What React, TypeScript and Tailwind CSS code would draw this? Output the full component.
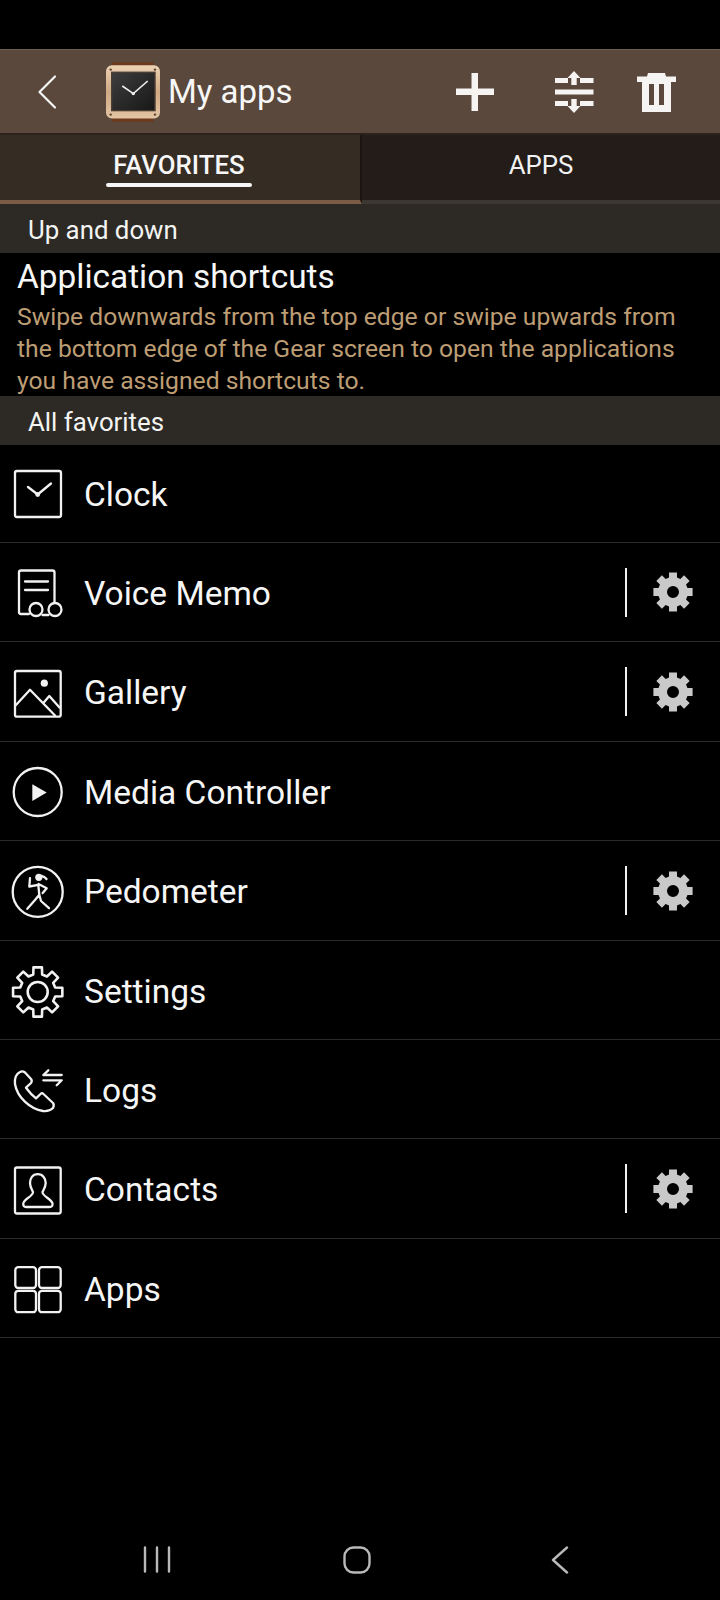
import React from "react";

function gear(cx: number, cy: number, ro: number, ri: number, n: number, tw: number, bw: number) {
  const p: string[] = [];
  for (let i = 0; i < n; i++) {
    const a = (i * 2 * Math.PI) / n - Math.PI / 2;
    const pt = (r: number, d: number) => `${(cx + r * Math.cos(a + d)).toFixed(2)} ${(cy + r * Math.sin(a + d)).toFixed(2)}`;
    p.push(`${i === 0 ? "M" : "L"}${pt(ri, -bw)}`, `L${pt(ro, -tw)}`, `L${pt(ro, tw)}`, `L${pt(ri, bw)}`);
  }
  return p.join(" ") + " Z";
}

const S = { fill: "none", stroke: "#f2f2f2", strokeWidth: 2.3, strokeLinecap: "round" as const, strokeLinejoin: "round" as const };

const Box = ({ children }: { children: React.ReactNode }) => (
  <svg viewBox="0 0 60 60" className="w-[60px] h-[60px] shrink-0 ml-[8px]" {...S}>
    {children}
  </svg>
);

const ClockI = () => (
  <Box>
    <rect x="7" y="7" width="46" height="46" rx="2" />
    <path d="M20 23 L29.7 30.5 L43 19.5" />
    <circle cx="29.7" cy="30.5" r="2.4" fill="#f2f2f2" stroke="none" />
  </Box>
);
const VoiceI = () => (
  <Box>
    <path d="M21 52 H13 Q11 52 11 50 V10.5 Q11 8.5 13 8.5 H44.5 Q46.5 8.5 46.5 10.5 V40.5" />
    <path d="M17 19.5 H40 M17 28 H40" />
    <circle cx="28" cy="47.5" r="6.5" />
    <circle cx="47" cy="47.5" r="6.5" />
    <path d="M34.5 53 H40.5" />
  </Box>
);
const GalleryI = () => (
  <Box>
    <rect x="7" y="9" width="45.7" height="45.7" rx="2" />
    <circle cx="36.3" cy="21.2" r="3.6" fill="#f2f2f2" stroke="none" />
    <path d="M8 43 L22 27.8 L47 53.5 M35.3 41 L41.3 34 L51.5 45.5" />
  </Box>
);
const MediaI = () => (
  <Box>
    <circle cx="29.7" cy="31" r="24" />
    <path d="M24.3 23.3 L38.7 31.5 L24.3 40 Z" fill="#f2f2f2" stroke="none" />
  </Box>
);
const PedoI = () => (
  <Box>
    <circle cx="29.7" cy="30.8" r="25" />
    <circle cx="30.8" cy="16.3" r="3.6" fill="#f2f2f2" stroke="none" />
    <path d="M33.5 15 Q36.5 15.5 38.5 18" />
    <path d="M22 17.2 L21.3 25.5 L30.3 23.8 L31.3 33.8 L27 39 L19.3 47.8 M31.3 33.8 L33 40 L41 47.2 M30.5 23 L38.7 27.2 L34.7 32" />
  </Box>
);
const SettingsI = () => (
  <Box>
    <path d={gear(29.7, 32, 25, 18, 8, 0.17, 0.25)} strokeWidth="2.6" />
    <circle cx="29.7" cy="32" r="10" strokeWidth="2.6" />
  </Box>
);
const LogsI = () => (
  <Box>
    <path d="M12 13 C8 15 6.5 20 7 25 C9 38 22 50 35 52 C39 52.5 43 51 45 49 Q46.5 46 45 44 L35.5 35 Q34 33.5 32.5 35 L28 39.3 Q23 35.5 18 28.7 L23 24 Q24.5 22 23 20 L17 13.5 Q14.5 11.5 12 13 Z" />
    <path d="M53.7 16 H35.3 L40.3 11.3 M35.3 21.3 H53.7 L48.7 26.3" />
  </Box>
);
const ContactsI = () => (
  <Box>
    <rect x="7" y="8.5" width="45.7" height="46" rx="2" />
    <path d="M29.7 15.2 C24.5 15.2 22 19.5 22 24 C22 28 24 31 25 33 C25.5 37 16 40 15.3 44.5 Q15 48 18 48 L41.5 48 Q45 48 44.5 44.5 C43.5 40 34 37 34.5 33 C35.5 31 37.7 28 37.7 24 C37.7 19.5 35 15.2 29.7 15.2 Z" />
  </Box>
);
const AppsI = () => (
  <Box>
    <rect x="7.3" y="9.2" width="20.7" height="20.8" rx="3" />
    <rect x="31" y="9.2" width="21.7" height="20.8" rx="3" />
    <rect x="7.3" y="32.8" width="20.7" height="21.4" rx="3" />
    <rect x="31" y="32.8" width="21.7" height="21.4" rx="3" />
  </Box>
);

const SmallGear = () => (
  <svg viewBox="0 0 40 40" className="w-[40px] h-[40px] ml-[26px]">
    <path fillRule="evenodd" fill="#c9c9c9" d={gear(20, 20, 20, 15, 8, 0.2, 0.27) + " M20 14 A6 6 0 1 0 20 26 A6 6 0 1 0 20 14 Z"} />
  </svg>
);

const rows: { name: string; Icon: () => React.ReactElement; gear?: boolean; h: string }[] = [
  { name: "Clock", Icon: ClockI, h: "h-[98px]" },
  { name: "Voice Memo", Icon: VoiceI, gear: true, h: "h-[99px]" },
  { name: "Gallery", Icon: GalleryI, gear: true, h: "h-[100px]" },
  { name: "Media Controller", Icon: MediaI, h: "h-[99px]" },
  { name: "Pedometer", Icon: PedoI, gear: true, h: "h-[100px]" },
  { name: "Settings", Icon: SettingsI, h: "h-[99px]" },
  { name: "Logs", Icon: LogsI, h: "h-[99px]" },
  { name: "Contacts", Icon: ContactsI, gear: true, h: "h-[100px]" },
  { name: "Apps", Icon: AppsI, h: "h-[99px]" },
];

const Section = ({ label, h }: { label: string; h: string }) => (
  <div className={`${h} bg-[#2d2a26] flex items-center pl-[28px] pt-[3px] text-[25.8px] text-[#f4f4f2]`}>{label}</div>
);

export default function App() {
  return (
    <div className="w-[720px] h-[1600px] bg-black text-white flex flex-col overflow-hidden font-['Roboto',sans-serif]">
      <div className="h-[49px] shrink-0" />
      <header className="h-[86px] shrink-0 bg-[#5a483c] border-t border-[#6e5e53] border-b-2 border-b-[#2c211b] flex items-center">
        <svg viewBox="0 0 20 36" className="w-[20px] h-[36px] ml-[37px]" fill="none" stroke="#f4f4f4" strokeWidth="2.2" strokeLinecap="round" strokeLinejoin="round">
          <path d="M18 2.5 L2.5 18 L18 33.5" />
        </svg>
        <svg viewBox="0 0 54 60" className="w-[54px] h-[60px] ml-[49px]">
          <defs>
            <linearGradient id="rim" x1="0" y1="0" x2="0" y2="1">
              <stop offset="0" stopColor="#ecd2b4" />
              <stop offset="0.5" stopColor="#cfa983" />
              <stop offset="1" stopColor="#e3c5a4" />
            </linearGradient>
            <linearGradient id="face" x1="0" y1="0" x2="1" y2="1">
              <stop offset="0" stopColor="#3d3d3d" />
              <stop offset="1" stopColor="#181818" />
            </linearGradient>
          </defs>
          <rect x="6.3" y="0" width="41" height="60" fill="#6b3a20" />
          <rect x="0" y="3.3" width="54" height="53.3" rx="6" fill="url(#rim)" />
          <rect x="5" y="9.6" width="44.7" height="39.7" fill="#4a3d33" />
          <rect x="6.3" y="11" width="42" height="37" fill="url(#face)" />
          <circle cx="4.7" cy="7.6" r="1.2" fill="#5a4030" />
          <circle cx="49" cy="7.6" r="1.2" fill="#5a4030" />
          <circle cx="4.7" cy="52.6" r="1.2" fill="#5a4030" />
          <circle cx="49" cy="52.6" r="1.2" fill="#5a4030" />
          <path d="M16.3 24 L27.3 31.6 L41.7 19" fill="none" stroke="#f0f0f0" strokeWidth="1.6" />
          <circle cx="27.3" cy="31.6" r="1.7" fill="#f0f0f0" />
        </svg>
        <span className="ml-[8px] text-[33px] leading-none text-[#f7f7f7]">My apps</span>
        <div className="flex-1" />
        <svg viewBox="0 0 38 38" className="w-[38px] h-[38px]" fill="#f6f4f2">
          <rect x="0" y="15.5" width="38" height="6.5" />
          <rect x="15.5" y="0" width="6.5" height="38" />
        </svg>
        <svg viewBox="0 0 39 42" className="w-[39px] h-[42px] ml-[61px]" fill="#f6f4f2">
          <rect x="0" y="18.5" width="38.5" height="5" />
          <path d="M0 7 H13 V12 H0 Z M25 7 H38.5 V12 H25 Z M0 30 H13 V35 H0 Z M25 30 H38.5 V35 H25 Z" />
          <path d="M19 0 L25.5 7 H21.7 V14 H16.3 V7 H12.5 Z M19 42 L25.5 35 H21.7 V28 H16.3 V35 H12.5 Z" />
        </svg>
        <svg viewBox="0 0 39 40" className="w-[39px] h-[40px] ml-[43px]">
          <path fill="#f6f4f2" fillRule="evenodd" d="M11 1 H28 L29 4.5 H39 V10 H34 V40 H5 V10 H0 V4.5 H10 Z M12 12 V33 H17 V12 Z M22 12 V33 H27 V12 Z" />
        </svg>
        <div className="w-[44px]" />
      </header>
      <div className="h-[69px] shrink-0 flex text-[25.8px]">
        <div className="w-[362px] bg-[#352c24] border-b-[4px] border-b-[#7a5c44] border-r-2 border-r-[#1c1410] flex justify-center pr-[2px]">
          <div className="relative flex items-start pt-[11px] font-medium text-[#f7f7f7] w-[146px] justify-center">
            FAVORITES
            <div className="absolute left-0 right-0 top-[48px] h-[4px] rounded-full bg-[#f7f7f7]" />
          </div>
        </div>
        <div className="w-[358px] bg-[#231c19] border-b-[4px] border-[#3d3731] flex justify-center pt-[11px] text-[#f2f2f2]">APPS</div>
      </div>
      <Section label="Up and down" h="h-[49px] shrink-0" />
      <div className="h-[143px] shrink-0 pl-[17px] pr-[10px] pt-[5px]">
        <div className="text-[33.4px] leading-[38px] text-[#f7f7f7]">Application shortcuts</div>
        <p className="mt-[5px] text-[24.7px] leading-[31.8px] text-[#bd9d74]">
          Swipe downwards from the top edge or swipe upwards from the bottom edge of the Gear screen to open the applications you have assigned shortcuts to.
        </p>
      </div>
      <Section label="All favorites" h="h-[49px] shrink-0" />
      <div>
        {rows.map((r) => (
          <div key={r.name} className={`${r.h} border-b border-[#2a2a2a] flex items-center`}>
            <r.Icon />
            <span className="ml-[16px] pt-[3px] text-[33.5px] leading-none text-[#f6f6f6] flex-1">{r.name}</span>
            {r.gear && (
              <div className="flex items-center mr-[27px]">
                <div className="w-[2px] h-[49px] bg-[#f0f0f0]" />
                <SmallGear />
              </div>
            )}
          </div>
        ))}
      </div>
      <div className="flex-1" />
      <nav className="h-[27px] mb-[27px] shrink-0 relative flex items-center">
        <svg viewBox="0 0 28 27" className="w-[28px] h-[27px] ml-[143px]" stroke="#b9b9b9" strokeWidth="2.4" strokeLinecap="round">
          <path d="M2 1.5 V25.5 M14 1.5 V25.5 M26 1.5 V25.5" />
        </svg>
        <svg viewBox="0 0 28 28" className="w-[28px] h-[28px] ml-[172px]" fill="none" stroke="#b9b9b9" strokeWidth="2.4">
          <rect x="1.5" y="1.5" width="25" height="25" rx="9" />
        </svg>
        <svg viewBox="0 0 18 28" className="w-[18px] h-[28px] ml-[180px]" fill="none" stroke="#b9b9b9" strokeWidth="2.4" strokeLinecap="round" strokeLinejoin="round">
          <path d="M16 1.5 L2 14 L16 26.5" />
        </svg>
      </nav>
    </div>
  );
}
